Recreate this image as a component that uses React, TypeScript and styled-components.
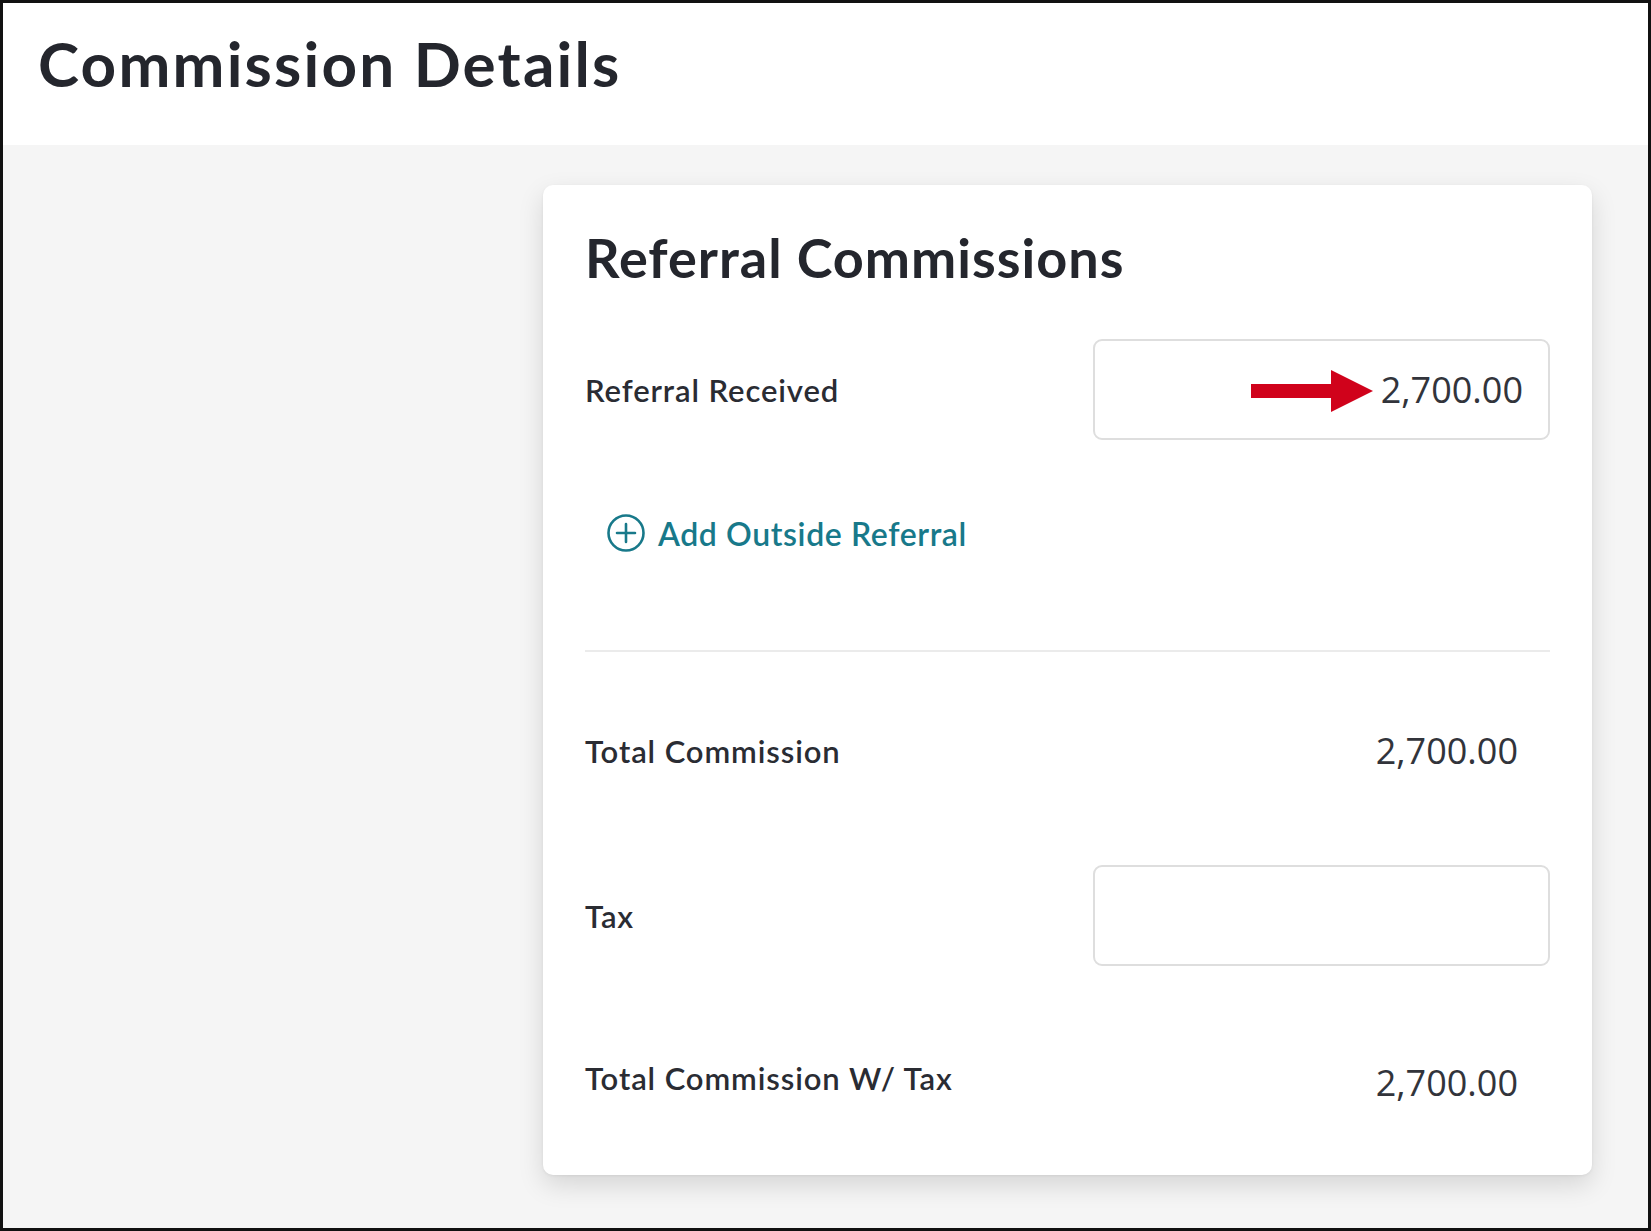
import React from 'react';
import styled, { createGlobalStyle } from 'styled-components';

const GlobalStyle = createGlobalStyle`
  html, body {
    margin: 0;
    padding: 0;
    background: #ffffff;
  }
  * {
    box-sizing: border-box;
  }
`;

type AmountRow = {
  label: string;
  value?: string;
  editable?: boolean;
  labelShift?: number;
  valueShift?: number;
};

const Frame = styled.div`
  width: 1651px;
  height: 1231px;
  border: 3px solid #111;
  display: flex;
  flex-direction: column;
  font-family: Lato, 'Liberation Sans', sans-serif;
  color: #24262d;
  overflow: hidden;
`;

const PageHeader = styled.header`
  height: 142px;
  background: #ffffff;
  display: flex;
  align-items: center;
  padding: 0 0 22px 35px;
`;

const PageTitle = styled.h1`
  margin: 0;
  font-size: 62px;
  font-weight: 700;
  letter-spacing: 2.2px;
`;

const Body = styled.main`
  flex: 1;
  background: #f5f5f5;
  display: grid;
  grid-template-columns: 540px 1fr;
  align-items: start;
  padding: 40px 56px 0 0;
`;

const Card = styled.section`
  grid-column: 2;
  background: #ffffff;
  border-radius: 10px;
  box-shadow: 0 10px 26px rgba(0, 0, 0, 0.13), 0 1px 3px rgba(0, 0, 0, 0.06);
  padding: 44px 42px 44px 42px;
`;

const CardTitle = styled.h2`
  margin: 0;
  font-size: 54px;
  line-height: 58px;
  font-weight: 700;
  letter-spacing: 1px;
`;

const Row = styled.div`
  height: 101px;
  display: grid;
  grid-template-columns: 1fr 457px;
  align-items: center;
`;

const FirstRow = styled(Row)`
  margin-top: 52px;
`;

const Label = styled.span<{ $shift?: number }>`
  font-size: 31px;
  font-weight: 600;
  letter-spacing: 0.9px;
  color: #2a2c33;
  transform: translateY(${(p) => p.$shift ?? 0}px);
`;

const AmountText = styled.span<{ $shift?: number }>`
  font-family: 'Open Sans', 'Liberation Sans', sans-serif;
  font-size: 36px;
  color: #32343b;
  text-align: right;
  transform: translateY(${(p) => p.$shift ?? 0}px);
`;

const StaticAmount = styled(AmountText)`
  padding-right: 32px;
`;

const InputBox = styled.div`
  position: relative;
  height: 101px;
  border: 2px solid #dedede;
  border-radius: 9px;
  display: flex;
  align-items: center;
  justify-content: flex-end;
  padding-right: 25px;
`;

const Pointer = styled.svg`
  position: absolute;
  left: 156px;
  top: 29px;
`;

const AddLink = styled.button`
  margin: 72px 0 0 21px;
  height: 42px;
  display: flex;
  align-items: center;
  gap: 12px;
  padding: 0;
  border: none;
  background: none;
  font-family: Lato, 'Liberation Sans', sans-serif;
  font-size: 32px;
  font-weight: 600;
  letter-spacing: 0.6px;
  color: #18798a;
  cursor: pointer;
`;

const Divider = styled.hr`
  margin: 96px 0 0;
  border: none;
  border-top: 2px solid #ebebeb;
`;

const Totals = styled.div`
  margin-top: 48px;
  display: flex;
  flex-direction: column;
  gap: 64px;
`;

const PlusCircle = () => (
  <svg width="40" height="40" viewBox="0 0 40 40" fill="none">
    <circle cx="20" cy="20" r="17.5" stroke="#18798a" strokeWidth="2.6" />
    <path d="M20 11v18M11 20h18" stroke="#18798a" strokeWidth="2.6" strokeLinecap="round" />
  </svg>
);

const totals: AmountRow[] = [
  { label: 'Total Commission', value: '2,700.00' },
  { label: 'Tax', editable: true },
  { label: 'Total Commission W/ Tax', value: '2,700.00', labelShift: -3, valueShift: 2 },
];

export default function App() {
  return (
    <>
      <GlobalStyle />
      <Frame>
        <PageHeader>
          <PageTitle>Commission Details</PageTitle>
        </PageHeader>
        <Body>
          <Card>
            <CardTitle>Referral Commissions</CardTitle>

            <FirstRow>
              <Label>Referral Received</Label>
              <InputBox>
                <Pointer width="122" height="42" viewBox="0 0 122 42">
                  <rect x="0" y="14" width="82" height="14" fill="#d0021b" />
                  <polygon points="80,0 122,21 80,42" fill="#d0021b" />
                </Pointer>
                <AmountText>2,700.00</AmountText>
              </InputBox>
            </FirstRow>

            <AddLink type="button">
              <PlusCircle />
              Add Outside Referral
            </AddLink>

            <Divider />

            <Totals>
              {totals.map((row) => (
                <Row key={row.label}>
                  <Label $shift={row.labelShift}>{row.label}</Label>
                  {row.editable ? (
                    <InputBox />
                  ) : (
                    <StaticAmount $shift={row.valueShift}>{row.value}</StaticAmount>
                  )}
                </Row>
              ))}
            </Totals>
          </Card>
        </Body>
      </Frame>
    </>
  );
}
